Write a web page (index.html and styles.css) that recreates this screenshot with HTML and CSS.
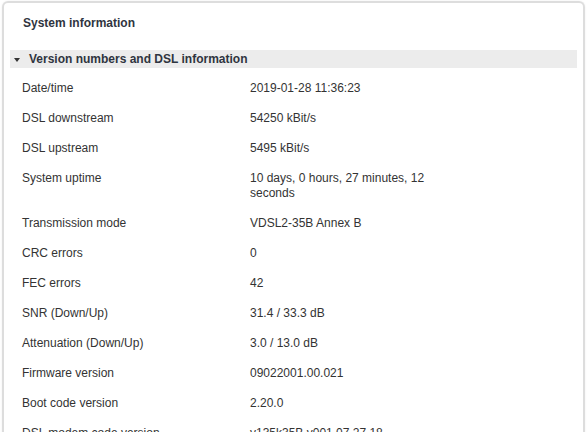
FILE: index.html
```html
<!DOCTYPE html>
<html lang="en">
<head>
    <meta charset="UTF-8">
    <title>System information</title>
    <link rel="stylesheet" href="styles.css">
</head>
<body>
    <div class="panel">
        <h2 class="panel-title">System information</h2>

        <!-- Version numbers section -->
        <div class="section">
            <div class="section-head">
                <span class="caret"></span>
                <span>Version numbers and DSL information</span>
            </div>
            <div class="info-list">
                <div class="info-row"><div class="label">Date/time</div><div class="value">2019-01-28 11:36:23</div></div>
                <div class="info-row"><div class="label">DSL downstream</div><div class="value">54250 kBit/s</div></div>
                <div class="info-row"><div class="label">DSL upstream</div><div class="value">5495 kBit/s</div></div>
                <div class="info-row"><div class="label">System uptime</div><div class="value">10 days, 0 hours, 27 minutes, 12 seconds</div></div>
                <div class="info-row"><div class="label">Transmission mode</div><div class="value">VDSL2-35B Annex B</div></div>
                <div class="info-row"><div class="label">CRC errors</div><div class="value">0</div></div>
                <div class="info-row"><div class="label">FEC errors</div><div class="value">42</div></div>
                <div class="info-row"><div class="label">SNR (Down/Up)</div><div class="value">31.4 / 33.3 dB</div></div>
                <div class="info-row"><div class="label">Attenuation (Down/Up)</div><div class="value">3.0 / 13.0 dB</div></div>
                <div class="info-row"><div class="label">Firmware version</div><div class="value">09022001.00.021</div></div>
                <div class="info-row"><div class="label">Boot code version</div><div class="value">2.20.0</div></div>
                <div class="info-row"><div class="label">DSL modem code version</div><div class="value">v135k35B.v001.07.27.18</div></div>
            </div>
        </div>
    </div>
</body>
</html>
```

FILE: styles.css
```css
/* General */
body {
    margin: 0;
    background-color: #fff;
    color: #333;
    font-family: "Liberation Sans", Arial, sans-serif;
    font-size: 12px;
    overflow: hidden;
}

/* Panel */
.panel {
    margin: 1px 3px 0 2px;
    border: 2px solid #ddd;
    border-bottom: none;
    border-radius: 6px 6px 0 0;
    box-shadow: 0 0 2px rgba(0, 0, 0, 0.08);
    padding: 0 6px 40px 6px;
    min-height: 500px;
}

.panel-title {
    margin: 0;
    padding: 13px 0 0 13px;
    font-size: 12px;
    line-height: 14px;
    font-weight: bold;
    color: #2f3540;
}

/* Section */
.section {
    margin-top: 20px;
}

.section-head {
    display: flex;
    align-items: center;
    height: 18px;
    background-color: #ececec;
    font-weight: bold;
    color: #2f3540;
}

.caret {
    width: 0;
    height: 0;
    margin: 1px 9px 0 4px;
    border-left: 3px solid transparent;
    border-right: 3px solid transparent;
    border-top: 4px solid #333;
}

.info-list {
    padding-top: 5px;
}

.info-row {
    display: flex;
    padding: 8px 0 7px 12px;
    line-height: 15px;
}

.label {
    width: 228px;
    flex-shrink: 0;
}

.value {
    width: 200px;
}
```
